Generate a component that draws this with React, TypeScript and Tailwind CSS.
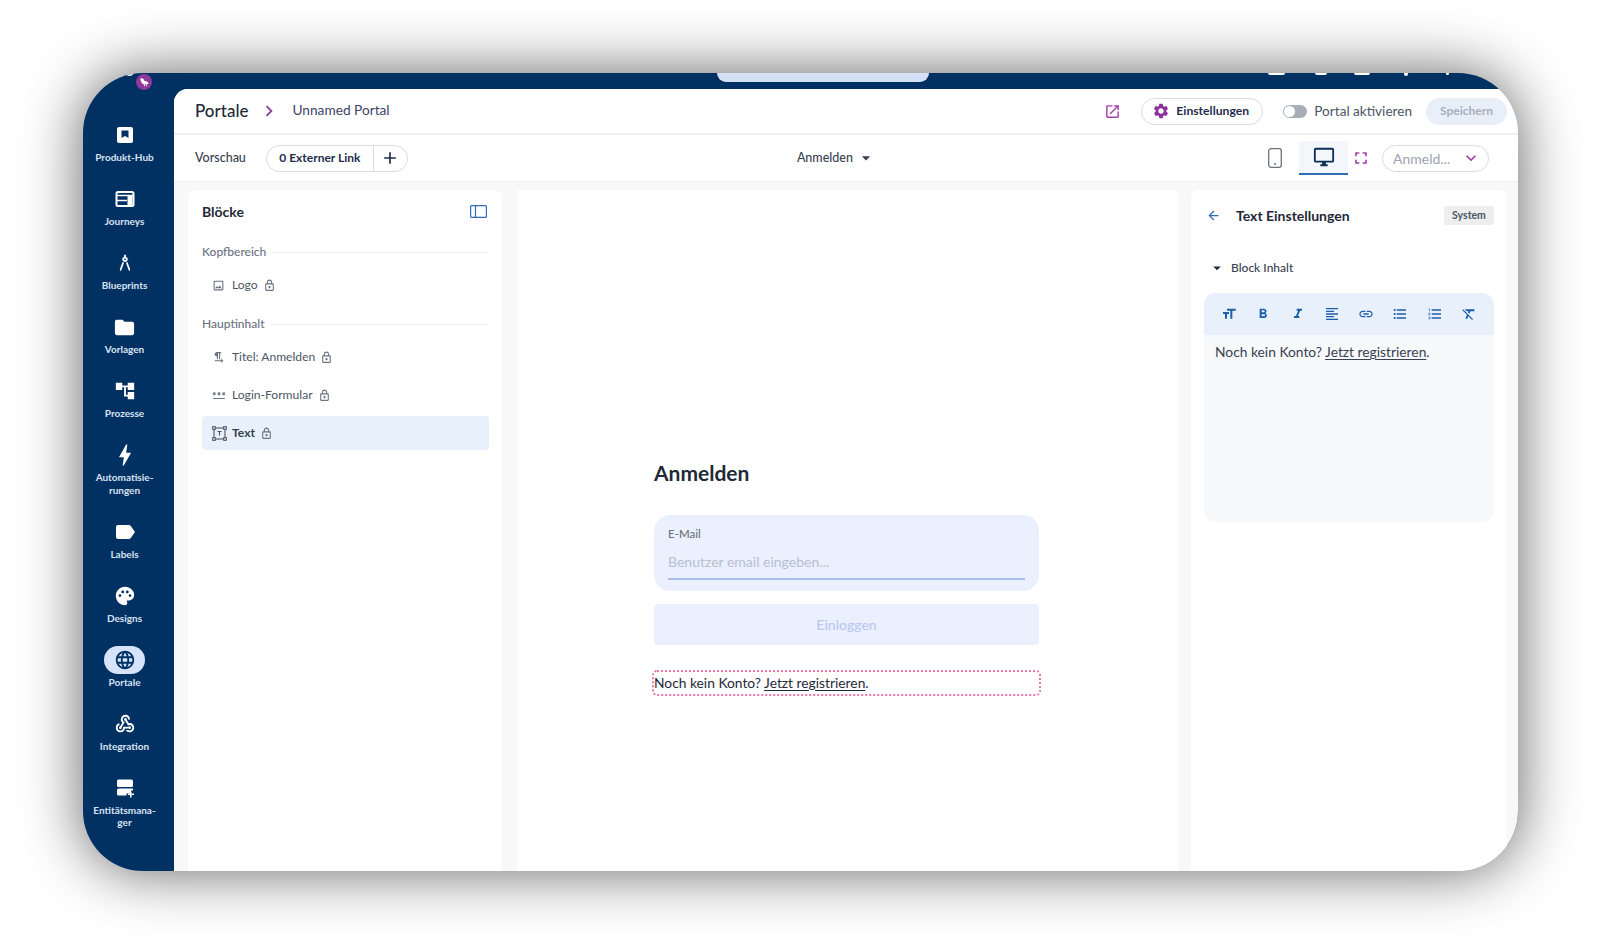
import React from "react";
import {
  MdArchitecture, MdFolder, MdAccountTree, MdBolt, MdLabel, MdPalette, MdLanguage, MdWebhook,
  MdFormatSize, MdFormatBold, MdFormatItalic, MdFormatAlignLeft, MdLink, MdFormatListBulleted,
  MdFormatListNumbered, MdFormatClear, MdOutlineImage, MdOutlinePassword, MdOutlineLock, MdOutlineOpenInNew,
  MdSettings, MdOutlineDesktopWindows, MdFullscreen, MdKeyboardArrowDown, MdArrowDropDown, MdArrowBack,
  MdChevronRight, MdAdd, MdFormatTextdirectionLToR,
} from "react-icons/md";

const font = { fontFamily: '"Lato", "Open Sans", sans-serif' };

const Hub = () => (
  <svg width="20" height="20" viewBox="0 0 20 20">
    <path fill="#fff" fillRule="evenodd" d="M4 2h12a2 2 0 0 1 2 2v12a2 2 0 0 1-2 2H4a2 2 0 0 1-2-2V4a2 2 0 0 1 2-2Zm2.5 3.5v7.5l3.5-2 3.500 2V5.500Z" />
  </svg>
);
const Journey = () => (
  <svg width="20" height="20" viewBox="0 0 20 20" fill="none" stroke="#fff">
    <rect x="1.500" y="3" width="17" height="14" rx="1.500" strokeWidth="2" />
    <path d="M2 6.500h16" strokeWidth="1.500" />
    <path d="M2 11.500h10" strokeWidth="1.500" />
    <rect x="12.500" y="7" width="5" height="9" fill="#fff" stroke="none" />
  </svg>
);
const Entity = () => (
  <svg width="20" height="20" viewBox="0 0 20 20" fill="#fff">
    <rect x="2" y="1.500" width="16" height="7.500" rx="1.500" />
    <path d="M3.500 10.500h14.500v2h-2v3h-4.500v2H3.500A1.500 1.500 0 0 1 2 16v-4a1.500 1.500 0 0 1 1.500-1.500Z" />
    <path d="M15 14h1.500v2H19v1.500h-2.500V20H15v-2.500h-2V16h2Z" transform="translate(0 -.5)" />
  </svg>
);
const Avatar = () => (
  <svg width="11" height="11" viewBox="0 0 11 11" fill="#fff">
    <path d="M1.500 1.500C3.500.5 5 2 5.500 4c1.200-.3 3 .3 4.500 2.500-1 .5-2 .8-2.500.8l.5 2h-.8l-.6-2h-1l.2 2h-.8l-.2-2C3 7 1.300 4 1.500 1.500Z" />
  </svg>
);
const TextBox = () => (
  <svg width="15" height="15" viewBox="0 0 15 15" fill="none" stroke="#4b5563" strokeWidth="1.100">
    <rect x="2" y="2" width="11" height="11" />
    <rect x=".7" y=".7" width="2.600" height="2.600" fill="#fff" />
    <rect x="11.700" y=".7" width="2.600" height="2.600" fill="#fff" />
    <rect x=".7" y="11.700" width="2.600" height="2.600" fill="#fff" />
    <rect x="11.700" y="11.700" width="2.600" height="2.600" fill="#fff" />
    <path d="M5.500 5.500h4M7.500 5.500v4" />
  </svg>
);
const PanelIcon = () => (
  <svg width="17" height="13" viewBox="0 0 17 13" fill="none" stroke="#2f6db5" strokeWidth="1.200">
    <rect x=".6" y=".6" width="15.800" height="11.800" rx="1" />
    <path d="M5.500 .6v11.800" />
  </svg>
);
const Phone = () => (
  <svg width="14" height="20" viewBox="0 0 14 20" fill="none">
    <rect x=".7" y=".7" width="12.600" height="18.600" rx="2.200" stroke="#6b7280" strokeWidth="1.300" />
    <circle cx="7" cy="16" r="1" fill="#6b7280" />
  </svg>
);

const navItems: { label: React.ReactNode; icon: React.ReactNode; active?: boolean }[] = [
  { label: "Produkt-Hub", icon: <Hub /> },
  { label: "Journeys", icon: <Journey /> },
  { label: "Blueprints", icon: <MdArchitecture size={22} color="#fff" /> },
  { label: "Vorlagen", icon: <MdFolder size={23} color="#fff" /> },
  { label: "Prozesse", icon: <MdAccountTree size={22} color="#fff" /> },
  { label: <>Automatisie-<br />rungen</>, icon: <MdBolt size={28} color="#fff" /> },
  { label: "Labels", icon: <MdLabel size={24} color="#fff" /> },
  { label: "Designs", icon: <MdPalette size={22} color="#fff" /> },
  { label: "Portale", icon: <MdLanguage size={22} color="#013163" />, active: true },
  { label: "Integration", icon: <MdWebhook size={22} color="#fff" /> },
  { label: <>Entitätsmana-<br />ger</>, icon: <Entity /> },
];

const Lock = () => <MdOutlineLock size={13} color="#6b7280" />;

const BlockRow = ({ icon, label, active }: { icon: React.ReactNode; label: string; active?: boolean }) => (
  <div className={`flex h-[34px] items-center rounded-[4px] pl-[10px] ${active ? "bg-[#e8f1fb]" : ""}`}>
    <span className="flex w-[20px] items-center justify-start">{icon}</span>
    <span className={`text-[12.1px] ${active ? "font-bold text-[#374151]" : "text-[#4b5563]"}`}>{label}</span>
    <span className="ml-[5px] flex items-center"><Lock /></span>
  </div>
);

const SectionTitle = ({ label }: { label: string }) => (
  <div className="flex items-center gap-[6px]">
    <span className="text-[12px] font-medium leading-[16px] text-[#6b7280]">{label}</span>
    <span className="h-px flex-1 bg-[#eeeff2]" />
  </div>
);

const editorIcons = [MdFormatSize, MdFormatBold, MdFormatItalic, MdFormatAlignLeft, MdLink, MdFormatListBulleted, MdFormatListNumbered, MdFormatClear];

export default function App() {
  return (
    <div style={font} className="h-[944px] w-[1600px] overflow-hidden bg-white pl-[83px] pt-[73px]">
      <div className="flex h-[798px] w-[1435px] overflow-hidden rounded-[60px] bg-[#013163] shadow-[0_0_60px_rgba(0,0,0,0.62)]">
        {/* sidebar */}
        <aside className="relative flex w-[91px] shrink-0 flex-col items-center pr-[8px] pt-[48px]">
          <span className="absolute left-[42px] top-[-6px] h-[9px] w-[9px] rounded-full bg-white" />
          <span className="absolute left-[53px] top-px flex h-[16px] w-[16px] items-center justify-center rounded-full bg-[#8e3a9d]">
            <Avatar />
          </span>
          {navItems.map((n, i) => (
            <div key={i} className="mb-[21.5px] flex w-full flex-col items-center">
              <div className={`flex h-[28px] w-[41px] items-center justify-center rounded-full ${n.active ? "bg-[#d5e3fb]" : ""}`}>{n.icon}</div>
              <div className="mt-[2px] text-center text-[10px] font-bold leading-[12.500px] text-[#d9e2f2]">{n.label}</div>
            </div>
          ))}
        </aside>

        {/* right of sidebar */}
        <div className="flex min-w-0 flex-1 flex-col">
          <div className="relative h-[16px] shrink-0">
            <span className="absolute left-[543px] top-0 h-[9px] w-[212px] rounded-b-[10px] bg-[#d6e0f7]" />
            <span className="absolute left-[1094px] top-0 h-[2px] w-[17px] rounded-b-[2px] bg-white" />
            <span className="absolute left-[1141px] top-0 h-[2px] w-[12px] rounded-b-[2px] bg-white" />
            <span className="absolute left-[1180px] top-0 h-[2px] w-[16px] rounded-b-[2px] bg-white" />
            <span className="absolute left-[1230px] top-0 h-[3px] w-[4px] rounded-b-[2px] bg-white" />
            <span className="absolute left-[1272px] top-0 h-[2px] w-[3px] rounded-b-[2px] bg-white" />
          </div>
          <main className="flex min-h-0 flex-1 flex-col rounded-tl-[14px] bg-[#f8f8f9]">
            {/* header */}
            <header className="flex h-[46px] shrink-0 items-center rounded-tl-[14px] border-b-[2px] border-[#eef0f3] bg-white pl-[21px] pr-[11px]">
              <span className="text-[17px] font-medium text-[#1f2937]">Portale</span>
              <MdChevronRight size={22} color="#8e3a9d" className="ml-[10px]" />
              <span className="mb-[2px] ml-[12px] text-[13.700px] text-[#3d4466]">Unnamed Portal</span>
              <MdOutlineOpenInNew size={17} color="#a23fa8" className="ml-auto" />
              <button className="ml-[20px] flex h-[27px] w-[122px] items-center justify-start gap-[6px] rounded-full border border-[#d8dbe2] pl-[10px] text-[12.200px] font-bold text-[#1f2d4d]">
                <MdSettings size={18} color="#8e2f9e" />Einstellungen
              </button>
              <span className="ml-[20px] flex h-[13px] w-[24px] items-center rounded-full bg-[#a8adb6] pl-[1px]">
                <span className="h-[11px] w-[11px] rounded-full bg-white" />
              </span>
              <span className="ml-[7px] text-[13.600px] text-[#4b5563]">Portal aktivieren</span>
              <button className="ml-[14px] flex h-[27px] w-[81px] items-center justify-center rounded-full bg-[#e8eff8] text-[12px] font-bold text-[#a3afbf]">Speichern</button>
            </header>

            {/* toolbar */}
            <div className="relative flex h-[47px] shrink-0 items-center border-b border-[#eef0f3] bg-white pl-[21px] pr-[29px]">
              <span className="text-[12.500px] font-medium text-[#374151]">Vorschau</span>
              <div className="ml-[20px] flex h-[27px] w-[142px] items-center rounded-full border border-[#d8dbe2]">
                <span className="flex h-[25px] w-[107px] justify-center border-r border-[#d8dbe2] text-[12px] font-bold leading-[23px] text-[#1f2d4d]">0 Externer Link</span>
                <span className="flex flex-1 justify-center"><MdAdd size={20} color="#1f2d4d" /></span>
              </div>
              <div className="ml-[389px] flex items-center">
                <span className="text-[12.500px] font-medium text-[#374151]">Anmelden</span>
                <MdArrowDropDown size={20} color="#374151" className="ml-[3px]" />
              </div>
              <div className="ml-auto flex items-center">
                <Phone />
                <div className="ml-[17px] flex h-[34px] w-[49px] items-center justify-center border-b-[2px] border-[#2f6db5] bg-[#f3f7fc]">
                  <MdOutlineDesktopWindows size={22} color="#0f2f57" />
                </div>
                <MdFullscreen size={20} color="#a23fa8" className="ml-[3px]" />
                <div className="ml-[11px] flex h-[27px] w-[107px] items-center rounded-full border border-[#d8dbe2] pl-[10px] pr-[7px] text-[14px] text-[#9ca3af]">
                  Anmeld...
                  <MdKeyboardArrowDown size={20} color="#a23fa8" className="ml-auto" />
                </div>
              </div>
            </div>

            {/* panels */}
            <div className="flex min-h-0 flex-1 pl-[14px] pt-[8px]">
              <section className="mr-[15px] w-[314px] shrink-0 rounded-t-[8px] bg-white pl-[14px] pr-[13px] pt-[11px]">
                <div className="flex h-[20px] items-center justify-between pr-[3px]">
                  <span className="text-[14px] font-bold text-[#1f2937]">Blöcke</span>
                  <span className="mr-[-1px] flex"><PanelIcon /></span>
                </div>
                <div className="mt-[23px]"><SectionTitle label="Kopfbereich" /></div>
                <div className="mt-[8px]">
                  <BlockRow icon={<MdOutlineImage size={13} color="#6b7280" />} label="Logo" />
                </div>
                <div className="mt-[14px]"><SectionTitle label="Hauptinhalt" /></div>
                <div className="mt-[8px] flex flex-col gap-[4px]">
                  <BlockRow icon={<MdFormatTextdirectionLToR size={13} color="#6b7280" />} label="Titel: Anmelden" />
                  <BlockRow icon={<MdOutlinePassword size={14} color="#6b7280" />} label="Login-Formular" />
                  <BlockRow icon={<TextBox />} label="Text" active />
                </div>
              </section>

              <section className="mr-[13px] w-[661px] shrink-0 bg-white pl-[137px] pt-[271px]">
                <h1 className="text-[21px] font-bold leading-[24px] text-[#1f2937]">Anmelden</h1>
                <div className="mt-[30px] h-[76px] w-[385px] rounded-[16px] bg-[#eaf0fe] px-[14px] pt-[12px]">
                  <div className="text-[11.500px] font-medium leading-[14px] text-[#6b7280]">E-Mail</div>
                  <div className="mt-[7px] h-[32px] border-b-[2px] border-[#a9bcee] text-[14px] leading-[28px] text-[#b7bfd2]">Benutzer email eingeben...</div>
                </div>
                <button className="mt-[13px] block h-[41px] w-[385px] rounded-[4px] bg-[#eaf0fe] text-[14px] font-medium text-[#b9c7f2]">Einloggen</button>
                <div className="ml-[-2px] mt-[25px] flex h-[26px] w-[389px] items-center rounded-[5px] border-2 border-dotted border-[#e878b4] text-[13.800px] text-[#1f2937]">
                  <span>Noch kein Konto? <span className="underline underline-offset-2">Jetzt registrieren</span>.</span>
                </div>
              </section>

              <section className="w-[316px] shrink-0 rounded-t-[8px] bg-white px-[13px] pt-[16px]">
                <div className="flex h-[19px] items-center">
                  <MdArrowBack size={15} color="#2f6db5" className="ml-[2px]" />
                  <span className="ml-[15px] text-[14px] font-bold text-[#1f2937]">Text Einstellungen</span>
                  <span className="ml-auto flex h-[19px] w-[50px] items-center justify-center rounded-[3px] bg-[#eeeeef] text-[10.500px] font-bold text-[#4b5563]">System</span>
                </div>
                <div className="mt-[33px] flex h-[20px] items-center pl-[4px]">
                  <MdArrowDropDown size={18} color="#1f2937" />
                  <span className="ml-[5px] text-[12px] font-medium text-[#374151]">Block Inhalt</span>
                </div>
                <div className="mt-[15px] h-[229px] overflow-hidden rounded-[12px] bg-[#f8f9fa]">
                  <div className="flex h-[42px] items-center justify-between bg-[#e8f1fb] px-[17px]">
                    {editorIcons.map((I, i) => <I key={i} size={16} color="#1d5ea8" />)}
                  </div>
                  <div className="px-[11px] pt-[7px] text-[13.800px] leading-[20px] text-[#374151]">
                    Noch kein Konto? <span className="underline underline-offset-2">Jetzt registrieren</span>.
                  </div>
                </div>
              </section>
            </div>
          </main>
        </div>
      </div>
    </div>
  );
}
